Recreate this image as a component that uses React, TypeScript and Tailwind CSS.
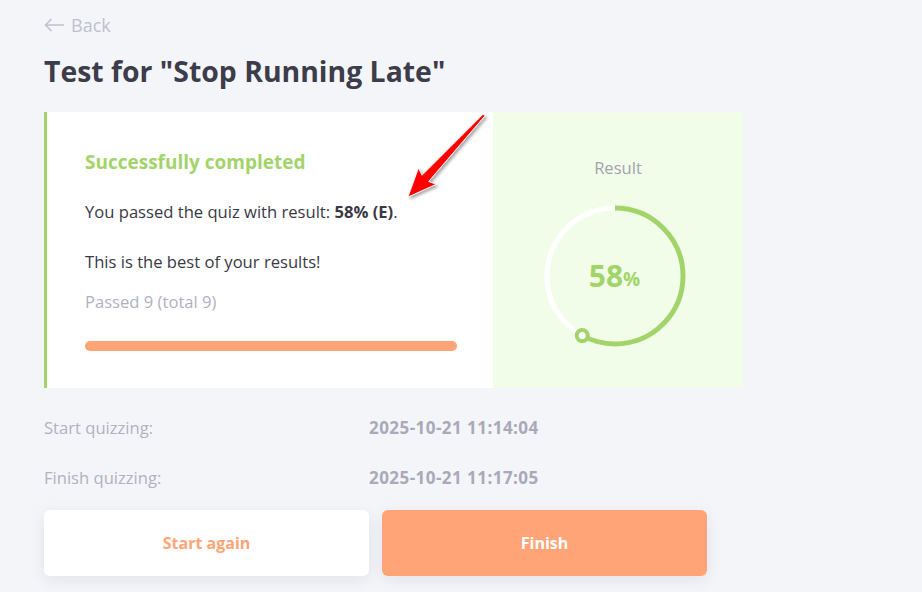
import { useState } from "react";

const FONT = { fontFamily: '"Open Sans", "Noto Sans", sans-serif' };

function ResultRing({ value }: { value: number }) {
  const r = 68;
  const c = 2 * Math.PI * r;
  const angle = (value / 100) * 2 * Math.PI;
  const dotX = 73 + r * Math.sin(angle);
  const dotY = 73 - r * Math.cos(angle);

  return (
    <div className="relative w-[146px] h-[146px]">
      <svg width="146" height="146" viewBox="0 0 146 146">
        <circle cx="73" cy="73" r={r} fill="none" stroke="#ffffff" strokeWidth="5" />
        <circle
          cx="73"
          cy="73"
          r={r}
          fill="none"
          stroke="#a2d46a"
          strokeWidth="5"
          strokeDasharray={`${(value / 100) * c} ${c}`}
          transform="rotate(-90 73 73)"
        />
        <circle cx={dotX} cy={dotY} r="5.5" fill="#ffffff" stroke="#a2d46a" strokeWidth="4" />
      </svg>
      <div className="absolute inset-0 flex items-center justify-center text-[#a2d46a] font-bold">
        <span className="text-[30px] leading-none">{value}</span>
        <span className="text-[19px] leading-none mt-[6px]">%</span>
      </div>
    </div>
  );
}

export default function App() {
  const [started, setStarted] = useState(false);

  return (
    <div className="relative min-h-[592px] w-full bg-[#f4f5f9] text-[#393946]" style={FONT}>
      <div className="pl-[44px] pt-[12px]">
        {/* BACK */}
        <button className="flex items-center gap-[6px] text-[#c0c0d0] text-[18px] leading-[26px]">
          <svg width="21" height="14" viewBox="0 0 21 14" fill="none" stroke="#c0c0d0" strokeWidth="1.6">
            <path d="M20 7H1.5M7.5 1L1.5 7l6 6" />
          </svg>
          Back
        </button>

        <h1 className="mt-[15px] text-[28.4px] leading-[36px] font-bold text-[#3c3c4b]">
          Test for "Stop Running Late"
        </h1>

        {/* CARD */}
        <div className="mt-[23px] w-[699px] h-[276px] flex border-l-[3px] border-[#a2d46a]">
          <div className="flex-1 bg-white pl-[38px] pt-[37px]">
            <h2 className="text-[19px] leading-[26px] font-bold text-[#a2d46a]">Successfully completed</h2>
            <p className="mt-[25px] text-[16.6px] leading-[24px]">
              You passed the quiz with result: <b>58% (E)</b>.
            </p>
            <p className="mt-[26px] text-[16.6px] leading-[24px]">This is the best of your results!</p>
            <p className="mt-[16px] text-[16.6px] leading-[24px] text-[#b1b1c1]">Passed 9 (total 9)</p>
            <div className="mt-[27px] w-[372px] h-[10px] rounded-full bg-[#ffa476]"></div>
          </div>

          <div className="w-[250px] bg-[#f1fde9] flex flex-col items-center pt-[44px]">
            <span className="text-[16.6px] leading-[24px] text-[#a3a3af]">Result</span>
            <div className="mt-[23px] mr-[7px]">
              <ResultRing value={58} />
            </div>
          </div>
        </div>

        {/* TIMES */}
        <div className="mt-[28px] grid grid-cols-[325px_1fr] gap-y-[26px] text-[16.6px] leading-[24px]">
          <span className="text-[#b1b1c1]">Start quizzing:</span>
          <span className="font-bold text-[17px] tracking-[0.45px] text-[#a9a9b8]">2025-10-21 11:14:04</span>
          <span className="text-[#b1b1c1]">Finish quizzing:</span>
          <span className="font-bold text-[17px] tracking-[0.45px] text-[#a9a9b8]">2025-10-21 11:17:05</span>
        </div>

        {/* BUTTONS */}
        <div className="mt-[20px] flex gap-[13px]">
          <button
            onClick={() => setStarted(!started)}
            className="w-[325px] h-[66px] rounded-[6px] bg-white text-[#ffa476] font-bold text-[16px] shadow-[0_4px_16px_rgba(30,30,60,0.08)]"
          >
            Start again
          </button>
          <button className="w-[325px] h-[66px] rounded-[6px] bg-[#ffa476] text-white font-bold text-[16px] shadow-[0_4px_16px_rgba(30,30,60,0.08)]">
            Finish
          </button>
        </div>
      </div>

      {/* ANNOTATION ARROW */}
      <svg className="absolute left-0 top-0 pointer-events-none" width="922" height="592">
        <defs>
          <filter id="arrowShadow" x="-20%" y="-20%" width="140%" height="140%">
            <feDropShadow dx="2" dy="2" stdDeviation="1.5" floodColor="#000" floodOpacity="0.35" />
          </filter>
        </defs>
        <polygon
          points="484.9,115.8 428.6,181.5 436.1,184.3 408,197 418.5,168.1 422,175.3 483.1,114.2"
          fill="#ff0000"
          stroke="#ffffff"
          strokeWidth="0.8"
          strokeLinejoin="round"
          filter="url(#arrowShadow)"
        />
      </svg>
    </div>
  );
}
